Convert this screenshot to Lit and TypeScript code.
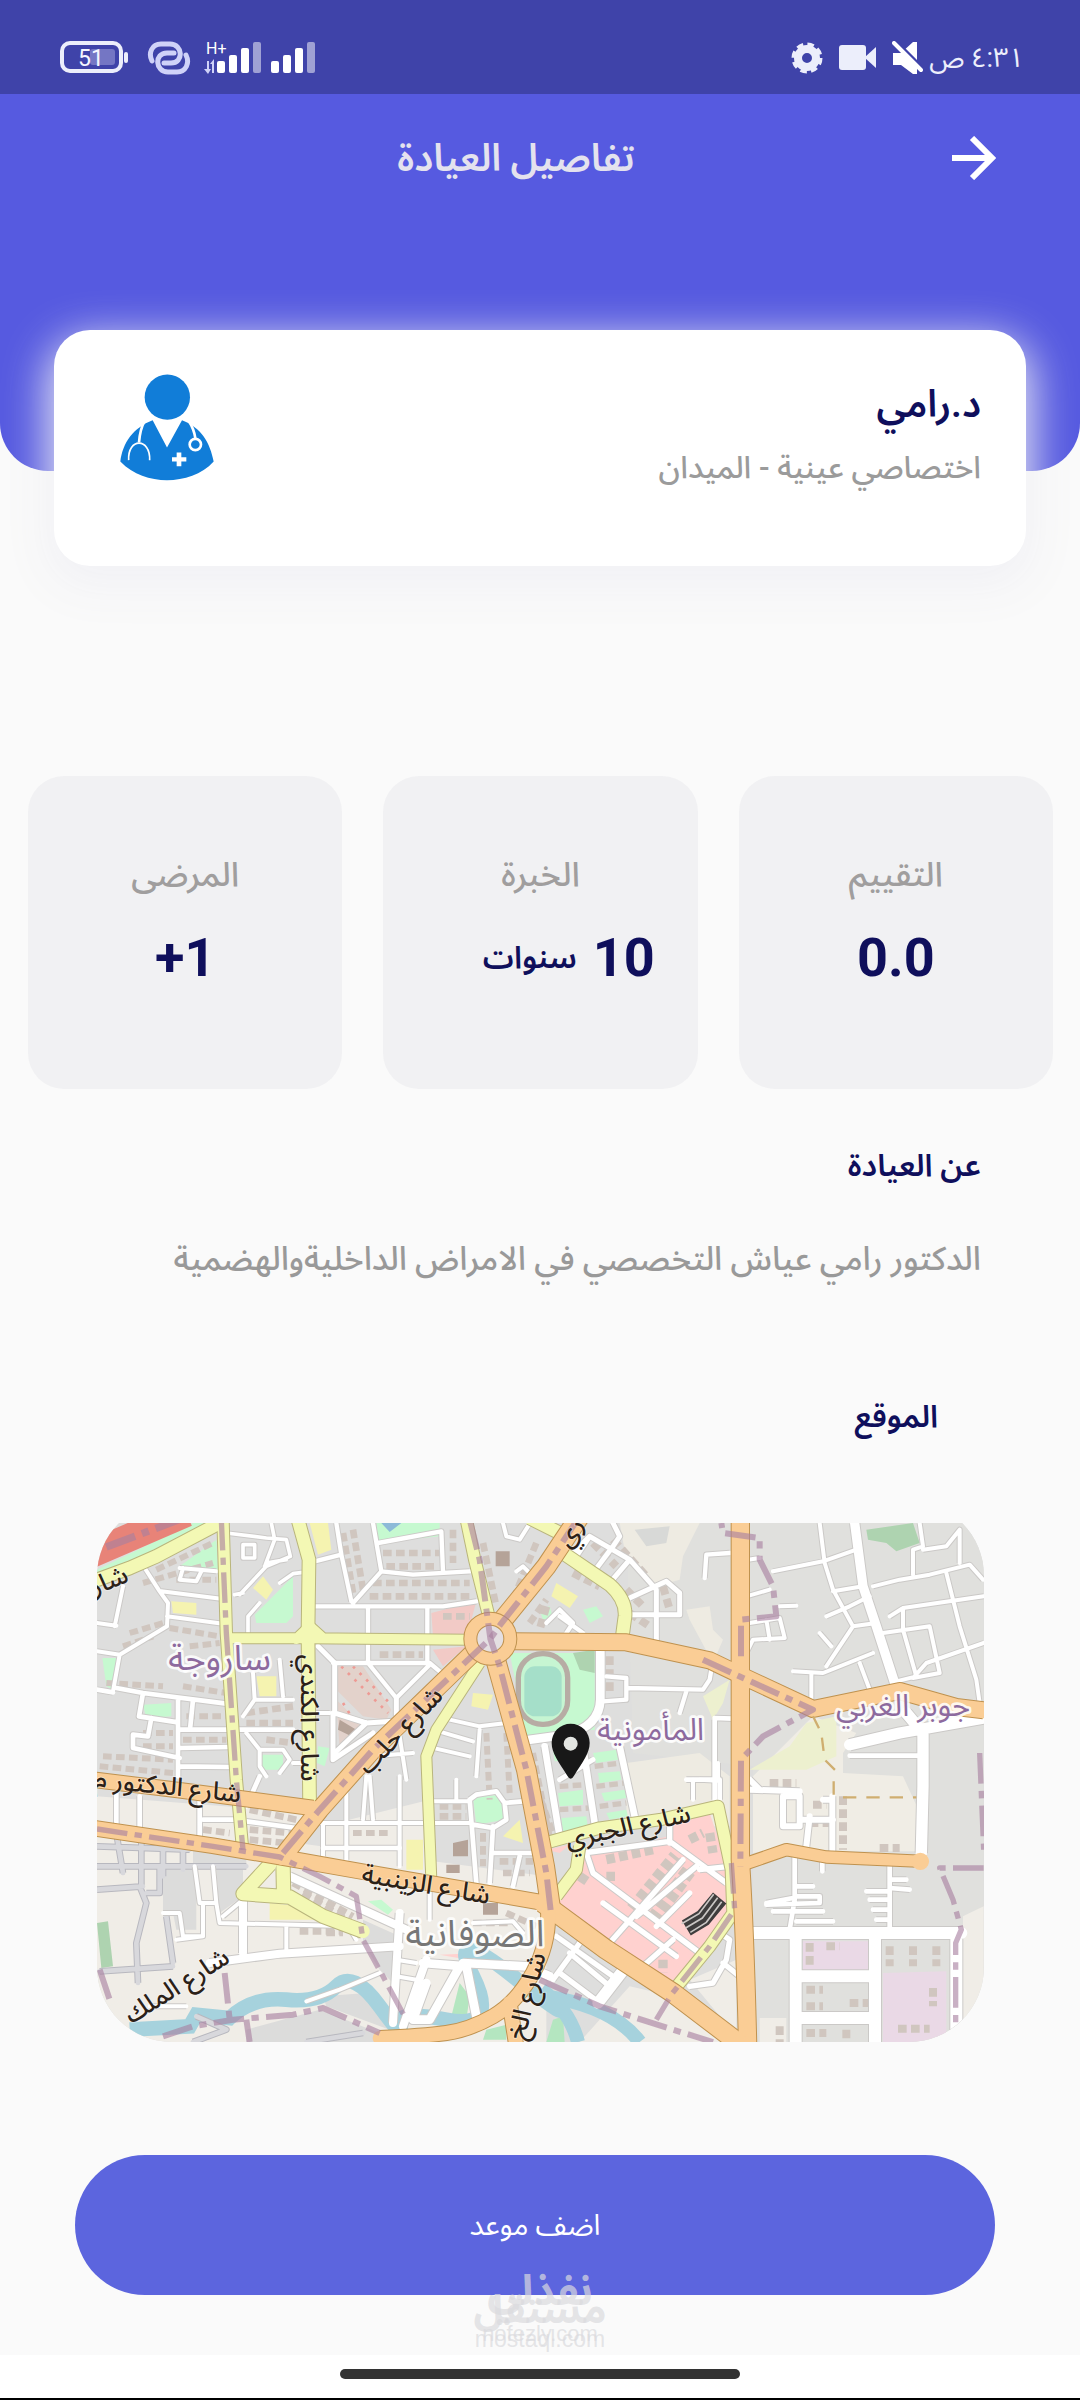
import { LitElement, html, svg, css } from "lit";
import { customElement } from "lit/decorators.js";

interface Road {
  d: string;
  w: number;
}

interface Label {
  text: string;
  x: number;
  y: number;
  size: number;
  angle: number;
  kind: "street" | "place" | "quarter";
}

const landuse: Array<[string, string]> = [
  ["#f0ede7", "M52 930 340 960 500 1010 1400 1130V1627H52Z"],
  ["#dcdcdb", "M250 1110H350V1290H290L280 1240 250 1235ZM410 1110H490V1190L420 1240ZM340 1050 500 1070V1100H340Z"],
  ["#dcdcdb", "M500 1590 720 1530 900 1600V1627H500ZM850 1260 960 1310 940 1450 900 1410 850 1330ZM730 1490 860 1480 930 1590 740 1520Z"],
  ["#f0ede7", "M52 890 690 940 620 1040 52 960ZM730 980 1050 900 1050 1110 730 1060Z"],
  ["#e0e0dd", "M1640 70H2712V1260L2640 1290V1627H2020V800L1660 760Z"],
  ["#eeebe2", "M1620 70H1860L1810 170 1800 240 1730 260 1640 180ZM1820 330 1890 320 1900 390 1930 420 1900 490 1830 360ZM1640 790 1860 760 1950 830V980H1640Z"],
  ["#d8d9d7", "M1665 90 1770 80 1760 130 1700 140Z"],
  ["#f0ede5", "M2020 830 2200 650 2330 700 2290 760V820L2470 830 2530 960V1055H2240L2120 1045 2020 1060Z"],
  ["#edf0cf", "M2010 810 2130 740 2180 670 2270 650V770L2180 810ZM1870 590 1950 540 1930 610 1900 660Z"],
  ["#f0ede7", "M2650 1250 2712 1220V1627H2650ZM2040 1555H2120V1627H2040ZM1650 1460 1780 1490 1960 1627H1500ZM1830 1440 1970 1380V1610Z"],
  ["#f2cac6", "M1055 340 1190 305 1170 380 1150 410H1060ZM1060 450 1160 440 1090 500Z"],
  ["#ffd1cf", "M1440 1190 1510 1060 1770 1010 1770 970 1890 940 1950 1120 1950 1250 1780 1465 1440 1210ZM1400 1050 1470 1035 1440 1060ZM1080 1365 1200 1360 1330 1410 1220 1390Z"],
  ["#ead9e6", "M2170 1325H2370V1410L2170 1415ZM2410 1420 2600 1415V1627H2410Z"],
  ["#c6f9d0", "M52 210 340 70H400L52 245ZM300 200 410 120 415 210ZM525 345 640 230V350L620 370H530ZM890 70H1080V110L895 130ZM68 475H110L100 570 80 560ZM190 615 275 610V650L200 655ZM545 765H610V810H545ZM715 740 750 745 735 800 712 790Z"],
  ["#c6f9d0", "M785 500 820 510 905 610 890 630ZM1180 895 1260 885 1275 960 1190 975ZM865 1205 905 1200 940 1230 925 1245ZM1290 460H1545V690L1340 710ZM1510 330 1550 320 1570 350 1530 370ZM1380 330 1410 320 1420 355 1390 360Z"],
  ["#c6f9d0", "M1420 750 1500 740 1495 780 1425 785ZM1435 880 1510 870V915L1440 920ZM1445 955 1520 950 1525 985 1450 1000ZM1540 760 1610 750 1615 780 1550 790ZM1555 820 1620 815 1625 840 1560 850ZM1565 880 1635 870 1640 895 1575 905ZM1580 940 1640 930 1645 950 1590 960Z"],
  ["#aed3b0", "M2360 90 2500 70 2520 130 2450 155 2420 130 2365 120ZM1480 460 1545 450V520L1500 510ZM52 1270 85 1265 100 1400 65 1405Z"],
  ["#b4e6c0", "M1110 1570 1140 1450 1170 1490 1160 1560ZM1220 1590 1280 1575 1280 1620 1210 1620ZM1400 1627 1420 1560 1450 1550 1455 1627Z"],
  ["#8dbad8", "M905 70H965L930 97Z"],
  ["#f5f3b0", "M690 70H745L755 150 715 165ZM520 265 550 230 580 270 560 300ZM275 305 350 310 350 345 280 340ZM530 530H590V590H540ZM1180 580 1240 585 1225 630 1175 620ZM1430 250 1495 290 1470 325 1415 290ZM570 1210 660 1220 720 1260H570ZM980 1020H1030V1110H980ZM1270 1010 1320 960 1330 1030Z"],
  ["#e3d2cb", "M770 500 850 500 935 630 920 660 850 650 770 570ZM770 600 850 680 780 750Z"],
];

const buildingRows: Array<[string, number]> = [
  ["M230 210 400 130M190 250 400 190M290 240H410M270 385 420 410M150 400 250 370M130 440 220 410M80 550 250 560M330 440 420 430", 18],
  ["M190 700H280M190 740H280M310 560 440 580M320 650H440M310 720H440M70 770 280 780M60 800 280 820", 18],
  ["M500 640 640 620M500 670H640M560 720 640 730M650 60V90M820 90 850 270M790 100 820 280M910 160H1080M920 200H1070", 20],
  ["M880 250H1170M870 290H1170M900 465H1030M1090 350H1170M1120 90V190M1210 130 1250 320M1370 130 1300 300M1350 370 1400 300", 20],
  ["M370 990 450 1000M370 1025 450 1030M510 930 650 960M510 990 640 1000M510 1020 620 1030M640 1150 820 1250M670 1180 800 1260", 20],
  ["M660 1295H780M740 1300H790M1080 920H1160M1080 950H1160M1260 1085H1360M1270 1120H1350M1180 1270H1290M1280 1240 1370 1280", 20],
  ["M820 1000H930M1210 1000V1100M1220 700 1230 900M1280 700 1290 880M1360 760 1410 1010M1370 860 1420 1000", 18],
  ["M1540 130 1610 200M1600 120 1700 230M1640 270 1690 320M1750 260 1770 330M1650 340 1710 380M1590 470V580M1400 320 1380 390M1480 220 1560 260", 24],
  ["M1440 860 1520 855M1440 930 1530 925M1545 800 1625 790M1550 860 1635 850M1560 920 1640 910", 16],
  ["M1660 1230 1790 1070M1720 1260 1830 1110", 44],
  ["M1830 1020 1870 1000M1890 1000 1900 1060M1580 1080 1720 1050M1580 1130H1610M1500 1130 1530 1150M1750 1380V1420", 28],
  ["M2290 890V1050M2200 915H2240M2400 1045H2460M2070 850H2150M2190 970H2250", 24],
  ["M2190 1330V1400M2240 1340H2280M2180 1470H2230M2180 1520H2230M2310 1510H2370M2180 1600H2240M2300 1590V1627M2560 1465V1520M2455 1587H2550M2100 1580V1627M2430 1340V1400M2500 1340V1400M2570 1340V1400", 24],
];

const minorRoads: Road[] = [
  { w: 12, d: "M195 205 240 275 265 310 262 380 120 465 52 455M245 275 430 298M262 350 430 372M120 465 100 575M300 205 410 215M310 205 300 240 350 245 365 215M130 260 105 380M52 370 110 378" },
  { w: 14, d: "M52 570 100 578M110 565 190 580 440 612M190 580 178 650 295 668M215 655 205 710 160 705V745L300 775M295 600V830M340 600 332 680M295 690H640M300 745 450 742M300 800 450 802" },
  { w: 11, d: "M440 100 560 115 620 120 632 170 560 200 480 285M575 70 585 120 555 200M490 135H525V175H490ZM465 285 490 280M560 190 620 180M505 400V350L540 310M600 250 640 222 670 218" },
  { w: 13, d: "M705 185 785 165 770 70M785 165 815 305M820 310 905 215 880 70M895 130 1085 95 1090 215M905 215 1000 225 1170 215M705 320H1090L1190 305M865 320V485M1043 320V490M760 490H1050L1080 515M865 490 950 595 1050 495" },
  { w: 15, d: "M715 440 765 490V640L860 670 940 665M950 595V650M860 670 765 760M760 640V780L880 700" },
  { w: 12, d: "M520 520 525 600 490 650M600 480 610 590M525 600 640 600M500 700 540 750V800L560 830M540 750H610L630 780 600 820M640 790H670M700 640H750M1270 70 1280 110 1320 120 1345 80M1310 215 1330 200 1350 220" },
  { w: 12, d: "M1110 660 1200 680 1280 670M1060 690 1180 725M1200 690 1190 830M960 710 980 840M880 770 1000 760M1040 740 1170 770M860 830 850 960M960 830V1100M720 970H1170M800 880V1080M730 970V1070M870 830 880 960M1060 905H1170M1130 840V900" },
  { w: 14, d: "M1170 900 1190 1150M1240 980 1230 1150M1170 900 1190 885 1250 875 1275 910 1330 905M1275 910 1280 960 1240 985 1180 975M1240 1060H1360M1320 1070 1300 1160M730 1045H960M500 920 540 830M500 965 650 985M360 900V1020M180 890V990M110 880V980M370 960H480" },
  { w: 24, d: "M490 1170V1360M390 1390 600 1362 960 1340M630 1130 980 1290M960 1240 940 1570M1040 1380 970 1580" },
  { w: 12, d: "M345 1100 360 1210H410L420 1270 820 1280M400 1100 410 1210M250 1240H300L310 1310H370V1215M620 1280V1350M800 1270 830 1320M290 1320 370 1310M430 1250 490 1200M1050 1130V1260M1180 1270 1300 1265 1330 1300M950 1380 1010 1390M950 1430 1010 1440M680 1505 780 1470 900 1420M210 1520H320" },
  { w: 26, d: "M1030 1390 1160 1400 1190 1550M1140 1400 1050 1560 1000 1560 1040 1450M1150 1390 1340 1400 1410 1430" },
  { w: 15, d: "M1440 840 1540 780M1480 160 1530 110 1650 180 1730 270 1730 430M1530 110 1490 170M1600 140 1540 220M1650 180 1590 250M1650 295 1760 245 1800 280 1800 345H1650M1600 140 1620 110 1600 70" },
  { w: 13, d: "M1400 370 1440 330 1480 370 1460 400M1440 350 1510 400M1580 530 1640 535 1640 600 1570 605M1640 565 1870 570 1890 540 1895 510M1820 575 1800 640M1875 235 1880 165 1950 160" },
  { w: 26, d: "M1562 450V600Q1560 680 1460 705L1340 722" },
  { w: 20, d: "M1395 740 1440 1010M1510 740 1545 970M1620 740 1665 950" },
  { w: 28, d: "M2325 70 2350 260 2390 380 2445 550" },
  { w: 12, d: "M2080 215 2230 185 2330 150M2220 70 2235 190 2260 270 2320 380 2240 500M2380 260 2460 240 2550 225 2670 195 2710 240M2240 350 2310 320 2370 290M2320 380 2390 370M2260 275 2350 260M2220 400 2255 440" },
  { w: 12, d: "M2520 70 2530 140 2500 150V225M2530 150 2600 140 2640 90V190M2410 400 2550 380 2580 520 2500 535 2540 490 2712 430M2600 220 2640 380 2690 540 2700 610M2430 350 2470 325 2712 290M2470 325V390L2510 530 2450 545" },
  { w: 12, d: "M2140 515 2230 520 2380 460M2195 520V600M2340 490 2370 570M2000 290 2070 270M2005 180 2040 175M2010 370 2100 355 2115 415 2020 420 2000 460M2060 360 2070 420M2100 320 2150 318M1840 840V900M1860 840 1915 843V790" },
  { w: 34, d: "M2310 735 2460 700 2712 655M2480 640 2530 700V860L2525 1060" },
  { w: 14, d: "M2310 768H2520M1905 655 1960 657M1905 660V900M1820 840H1920V900" },
  { w: 18, d: "M2258 890V1060M2190 950 2180 1040M2110 890H2160V980H2110ZM2010 870 2160 875M2010 840 2040 870M2160 960H2260M2230 900H2250" },
  { w: 14, d: "M2145 1070V1200L2130 1290M2228 1085V1115M2430 1100V1290M2150 1160H2200M2150 1190H2220V1210L2060 1215M2060 1210 2140 1195M2080 1235H2230M2150 1265H2260M2360 1175H2430M2430 1140H2480M2430 1165 2490 1170M2370 1200H2430M2380 1230H2430M2390 1260H2430" },
  { w: 36, d: "M2020 1300H2645M2148 1300V1627M2386 1310V1627M2148 1430H2386M2148 1555H2386M2630 1300V1627" },
  { w: 16, d: "M1510 1060 1770 1025 1940 1150M1520 1060 1540 1120 1860 1360M1770 980V1030M1590 1330 1810 1080M1690 1400 1780 1320M1570 1210 1790 1370M1730 1280 1830 1180M1670 1250 1850 1100M1860 1110 1950 1100" },
  { w: 16, d: "M1430 1310 1600 1430M1500 1330 1420 1440M1470 1360 1590 1460M1440 1420 1560 1510M1920 1300 1950 1320 1940 1380 1900 1450 1830 1460M1930 1390 1980 1430" },
  { w: 34, d: "M1640 1400 1555 1510" },
];

const greyRoads: Road[] = [
  { w: 14, d: "M52 1040 330 1050M52 1100H330M110 1000 130 1120M185 1000V1160M250 1040V1130M310 1050V1110M180 1160 200 1210 170 1330 175 1450M60 1415 280 1400M260 1250 280 1390M52 1170 190 1160M200 1180H240V1100M330 1100H500M350 1550 440 1590 340 1627M680 1627 850 1600" },
];

const yellowRoads: Road[] = [
  { w: 38, d: "M40 245 150 205 230 170 420 70" },
  { w: 34, d: "M430 60 440 400 470 840 490 1060" },
  { w: 38, d: "M655 60 688 180 685 400 690 940" },
  { w: 30, d: "M450 416 690 416 1170 420M650 418 690 380 730 416" },
  { w: 34, d: "M1160 60 1185 180 1230 360" },
  { w: 30, d: "M1200 490 1070 690 1040 770 1055 1140" },
  { w: 38, d: "M1450 160 1590 255Q1640 300 1636 350L1628 410M1350 55 1450 105" },
  { w: 34, d: "M1390 1032 1560 985 1740 960 1915 920 1955 1110 1960 1240 1890 1340 1775 1480" },
  { w: 34, d: "M1500 1040 1490 1110 1430 1190" },
  { w: 40, d: "M570 1095 490 1182 630 1192 730 1250 850 1295M610 1090 612 1190" },
];

const orangeRoads: Road[] = [
  { w: 48, d: "M1300 425 1640 428 1890 482 1990 530 2200 628 2460 574 2630 622 2712 632" },
  { w: 52, d: "M1982 60V1080Q1996 1300 2004 1640" },
  { w: 56, d: "M1262 370 1400 200 1500 50" },
  { w: 52, d: "M1190 450 880 750 720 930 610 1070" },
  { w: 56, d: "M1245 470 1340 810 1395 1100 1415 1240" },
  { w: 44, d: "M40 840 300 872 700 925" },
  { w: 44, d: "M40 985 400 1038 600 1072 900 1125 1410 1212" },
  { w: 56, d: "M1390 1210 1580 1350 1780 1480 1990 1640" },
  { w: 42, d: "M1405 1230Q1410 1330 1360 1420T1240 1550 1100 1600 900 1615M1290 1510 1310 1640" },
  { w: 34, d: "M1990 1095 2120 1050 2240 1072 2530 1085" },
];

const boundaries: Road[] = [
  { w: 16, d: "M425 60 440 400 470 840 490 1050" },
  { w: 18, d: "M1500 50 1400 200 1262 375 1232 417 880 750 720 930 610 1060" },
  { w: 18, d: "M1170 60 1200 180 1232 417 1260 500 1340 810 1400 1120 1415 1250" },
  { w: 16, d: "M52 988 400 1040 600 1072 720 1130 830 1190 850 1320 910 1430 980 1560" },
  { w: 18, d: "M1870 480 1990 535 2200 630 2050 710 1984 780 1982 1100M1984 470V360L2090 350 2080 260 2040 180 2040 115 1930 100 1925 70" },
  { w: 16, d: "M1955 1090 1965 1230 1890 1340 1775 1485 1730 1560" },
  { w: 18, d: "M1380 1440 1560 1520 1780 1590 1900 1627" },
  { w: 18, d: "M250 1610 340 1580 460 1560 640 1545 730 1525 900 1600M435 1420 450 1560M500 1560 510 1627M60 1410 90 1500" },
  { w: 16, d: "M2712 1105H2580L2620 1200 2645 1290 2628 1330V1627M2700 760 2712 1050" },
  { w: 22, d: "M80 142 330 48" },
];

const labels: Label[] = [
  { text: "ساروجة", x: 420, y: 510, size: 104, angle: 0, kind: "place" },
  { text: "المأمونية", x: 1713, y: 722, size: 92, angle: 0, kind: "place" },
  { text: "جوبر الغربي", x: 2470, y: 648, size: 92, angle: 0, kind: "place" },
  { text: "الصوفانية", x: 1186, y: 1340, size: 110, angle: 0, kind: "quarter" },
  { text: "شارع الكندي", x: 665, y: 655, size: 76, angle: 90, kind: "street" },
  { text: "شارع حلب", x: 980, y: 710, size: 76, angle: -46, kind: "street" },
  { text: "شارع الدكتور م", x: 262, y: 885, size: 76, angle: 6, kind: "street" },
  { text: "شارع الزينبية", x: 1035, y: 1180, size: 76, angle: 10, kind: "street" },
  { text: "شارع الجبري", x: 1650, y: 1005, size: 76, angle: -12, kind: "street" },
  { text: "شارع الملك", x: 305, y: 1480, size: 76, angle: -32, kind: "street" },
  { text: "شارع الخ", x: 1366, y: 1495, size: 76, angle: -76, kind: "street" },
  { text: "شار", x: 98, y: 266, size: 76, angle: -22, kind: "street" },
  { text: "ري", x: 1492, y: 112, size: 76, angle: -58, kind: "street" },
];

@customElement("clinic-map")
export class ClinicMap extends LitElement {
  static styles = css`
    :host {
      display: block;
    }
    .canvas {
      display: block;
      width: 100%;
      height: auto;
    }
    .case,
    .fill,
    .dash {
      fill: none;
      stroke-linejoin: round;
    }
    .fill {
      stroke-linecap: round;
    }
    .dash {
      stroke: #a8809f;
      stroke-opacity: 0.62;
      stroke-dasharray: 92 22 22 22;
    }
    .rows {
      fill: none;
      stroke: #d0c6bf;
      stroke-dasharray: 26 13;
    }
    .label {
      font-family: "Noto Sans Arabic", "Noto Sans", "DejaVu Sans", sans-serif;
      paint-order: stroke;
      stroke-linejoin: round;
      text-anchor: middle;
      direction: rtl;
    }
    .street {
      font-weight: 500;
      fill: #2b2118;
      stroke: #fff;
      stroke-opacity: 0.35;
      stroke-width: 6;
    }
    .place {
      fill: #8d6a9e;
      stroke: #fff;
      stroke-opacity: 0.85;
      stroke-width: 16;
    }
    .quarter {
      fill: #777;
      stroke: #fff;
      stroke-opacity: 0.85;
      stroke-width: 16;
    }
  `;

  private roads(list: Road[], fill: string, edge: string) {
    return svg`
      ${list.map((r) => svg`<path class="case" d=${r.d} stroke=${edge} stroke-width=${r.w + 6}></path>`)}
      ${list.map((r) => svg`<path class="fill" d=${r.d} stroke=${fill} stroke-width=${r.w}></path>`)}
    `;
  }

  render() {
    return html`
      <svg class="canvas" viewBox="52 70 2661 1557" role="img" aria-label="خريطة موقع العيادة">
        <defs>
          <clipPath id="frame"><rect x="52" y="4" width="2661" height="1623" rx="225"></rect></clipPath>
        </defs>
        <g clip-path="url(#frame)">
          <rect x="52" y="70" width="2661" height="1557" fill="#dededd"></rect>
          ${landuse.map(([fill, d]) => svg`<path d=${d} fill=${fill}></path>`)}
          ${buildingRows.map(([d, w]) => svg`<path class="rows" d=${d} stroke-width=${w}></path>`)}
          <path d="M1248 155H1290V200H1248ZM1120 1030 1165 1020V1070H1120ZM1210 1210H1255V1245H1210ZM780 660 830 690 815 710 775 690ZM1100 1095H1140V1120H1100Z" fill="#b5a398"></path>
          <path d="M785 500 925 640M790 610 840 690M820 500 930 610" fill="none" stroke="#ee9a94" stroke-width="8" stroke-dasharray="8 20"></path>
          <path d="M150 1590 330 1580 350 1545 450 1555Q520 1490 620 1500T770 1460 900 1520 960 1580 1100 1560 1180 1430 1300 1430 1420 1500" fill="none" stroke="#a6d2dd" stroke-width="44"></path>
          <path d="M1385 1470Q1470 1530 1495 1627M1400 1490Q1600 1520 1680 1627" fill="none" stroke="#a6d2dd" stroke-width="42"></path>
          <rect x="1316" y="462" width="148" height="212" rx="72" fill="#c6f5d2" stroke="#b7aca4" stroke-width="16"></rect>
          <rect x="1334" y="500" width="112" height="150" rx="32" fill="#a5dfc9"></rect>
          <path d="M30 165 320 40" fill="none" stroke="#e88378" stroke-width="84"></path>
          ${this.roads(greyRoads, "#d8d8dc", "#b8b8bf")}
          ${this.roads(minorRoads, "#ffffff", "#cbc9c7")}
          ${this.roads(yellowRoads, "#f3f8b4", "#b9b57c")}
          ${this.roads(orangeRoads, "#facd95", "#bf924f")}
          <circle cx="2522" cy="1085" r="26" fill="#facd95"></circle>
          <circle cx="1232" cy="417" r="60" fill="#e4dfe2" stroke="#bf924f" stroke-width="42"></circle>
          <circle cx="1232" cy="417" r="60" fill="none" stroke="#facd95" stroke-width="36"></circle>
          ${boundaries.map((r) => svg`<path class="dash" d=${r.d} stroke-width=${r.w}></path>`)}
          <path d="M2200 650 2225 700 2235 780 2270 815M2262 845V890M2290 893H2510" fill="none" stroke="#cfae70" stroke-width="7" stroke-dasharray="40 30"></path>
          <path d="M1820 1285 1870 1255 1920 1195" fill="none" stroke="#3f3d3d" stroke-width="52"></path>
          <path d="M1806 1272 1858 1242 1902 1184M1818 1285 1868 1255 1914 1194M1832 1298 1880 1268 1926 1206" fill="none" stroke="#c9c6c4" stroke-width="5"></path>
          ${labels.map(
            (l) => svg`<text class="label ${l.kind}" x=${l.x} y=${l.y} font-size=${l.size} transform="rotate(${l.angle} ${l.x} ${l.y})">${l.text}</text>`
          )}
          <path d="M1473 672a57 57 0 0 0-57 58c0 30 20 55 47 98q10 18 20 0c27-43 47-68 47-98a57 57 0 0 0-57-58Z" fill="#181818"></path>
          <circle cx="1473" cy="732" r="21" fill="#e4e6e2"></circle>
        </g>
      </svg>
    `;
  }
}

@customElement("status-bar")
export class StatusBar extends LitElement {
  static styles = css`
    :host {
      display: block;
    }
    .bar {
      display: flex;
      justify-content: space-between;
      align-items: center;
      height: 94px;
      padding: 22px 56px 0 60px;
      box-sizing: border-box;
      background: #3f43a9;
      color: #eceefb;
      direction: ltr;
    }
    .group {
      display: flex;
      align-items: center;
      gap: 13px;
    }
    .alerts {
      display: flex;
      align-items: center;
      gap: 16px;
    }
    .icon {
      display: block;
    }
    .clock {
      font: 27px/36px Roboto, "Noto Sans Arabic", "DejaVu Sans", sans-serif;
      direction: rtl;
    }
    .tiny {
      font-family: Roboto, sans-serif;
    }
    .right {
      gap: 6px;
    }
  `;

  render() {
    return html`
      <div class="bar">
        <div class="group">
          <svg class="icon" width="74" height="34" viewBox="0 0 74 34">
            <rect x="2" y="2" width="59" height="28" rx="8" fill="none" stroke="#eceefb" stroke-width="4"></rect>
            <rect x="30" y="8" width="25" height="16" rx="3" fill="#7476c4"></rect>
            <rect x="64" y="11" width="4" height="11" rx="2" fill="#eceefb"></rect>
            <text class="tiny" x="31" y="25" font-size="23" text-anchor="middle" fill="#f4f5ff">51</text>
          </svg>
          <svg class="icon" width="44" height="36" viewBox="0 0 44 36" fill="none" stroke="#cfd2f8" stroke-width="5" stroke-linecap="round">
            <path d="M5 21C1 13 5 4 14 4H23C36 4 37 23 24 23H17"></path>
            <path d="M39 15C43 23 39 32 30 32H21C8 32 7 13 20 13H27"></path>
          </svg>
          <svg class="icon" width="114" height="36" viewBox="0 0 114 36" fill="#fff">
            <text class="tiny" x="2" y="14" font-size="16">H+</text>
            <path d="M3 21h2v8h2l-3 5-4-5h3zM8 33V24H6l4-5v14z" fill="#cfd2f8"></path>
            <rect x="13" y="21" width="8" height="12" rx="2"></rect>
            <rect x="25" y="15" width="8" height="18" rx="2"></rect>
            <rect x="37" y="8" width="8" height="25" rx="2"></rect>
            <rect x="49" y="2" width="8" height="31" rx="2" opacity=".5"></rect>
            <rect x="67" y="21" width="8" height="12" rx="2"></rect>
            <rect x="79" y="15" width="8" height="18" rx="2"></rect>
            <rect x="91" y="8" width="8" height="25" rx="2"></rect>
            <rect x="103" y="2" width="8" height="31" rx="2" opacity=".5"></rect>
          </svg>
        </div>
        <div class="group right">
          <div class="alerts">
            <svg class="icon" width="32" height="32" viewBox="0 0 32 32">
              <circle cx="16" cy="16" r="9" fill="none" stroke="#eceefb" stroke-width="8"></circle>
              <circle cx="16" cy="16" r="13" fill="none" stroke="#eceefb" stroke-width="5" stroke-dasharray="6.2 4.01"></circle>
            </svg>
            <svg class="icon" width="37" height="26" viewBox="0 0 37 26" fill="#eceefb">
              <rect x="0" y="0" width="27" height="25" rx="3"></rect>
              <path d="M26 12 37 2v21L26 13z"></path>
            </svg>
            <svg class="icon" width="31" height="34" viewBox="0 0 31 34">
              <path d="M1 12h8L21 1h4v32h-4L9 24H1z" fill="#fff"></path>
              <path d="M1 -3 32 28" stroke="#3f43a9" stroke-width="3"></path>
              <path d="M2 2 29 29" stroke="#fff" stroke-width="4" stroke-linecap="round"></path>
            </svg>
          </div>
          <span class="clock">٤:٣١ ص</span>
        </div>
      </div>
    `;
  }
}

@customElement("app-root")
export class AppRoot extends LitElement {
  static styles = css`
    :host {
      display: block;
      color: #0f0f5c;
      background: #fafafa;
      font-family: Roboto, "Noto Sans Arabic", "DejaVu Sans", sans-serif;
    }
    .page {
      display: flex;
      flex-direction: column;
      min-height: 100vh;
    }
    .hero {
      height: 377px;
      padding: 34px 76px 0;
      box-sizing: border-box;
      background: #565ae0;
      border-radius: 0 0 48px 48px;
    }
    .toolbar {
      display: grid;
      grid-template-columns: 60px 1fr 60px;
      align-items: center;
    }
    .back {
      display: grid;
      place-items: center;
      width: 60px;
      height: 60px;
      padding: 0;
      border: 0;
      background: none;
    }
    .title {
      margin: 0;
      padding-right: 48px;
      text-align: center;
      font-size: 38px;
      line-height: 60px;
      font-weight: 600;
      color: #e4e2ee;
    }
    .doctor {
      display: flex;
      justify-content: space-between;
      align-items: flex-start;
      margin: -141px 54px 0;
      padding: 44px 45px 68px 66px;
      border-radius: 36px;
      background: #fff;
      box-shadow: 0 14px 44px 6px rgba(240, 240, 244, 0.95);
    }
    .name,
    .speciality,
    .heading,
    .about {
      margin: 0;
      line-height: 60px;
    }
    .name {
      font-size: 38px;
      font-weight: 600;
    }
    .speciality {
      margin-top: 4px;
      font-size: 31px;
      font-weight: 500;
      color: #9b9b9b;
    }
    .stats {
      display: grid;
      grid-template-columns: repeat(3, 1fr);
      gap: 41px;
      margin: 210px 27px 0 28px;
    }
    .stat {
      padding: 68px 0 91px;
      border-radius: 36px;
      background: #f1f1f3;
      text-align: center;
    }
    .stat-label {
      margin: 0 0 14px;
      font-size: 34px;
      line-height: 60px;
      font-weight: 500;
      color: #a09e9e;
    }
    .stat-value {
      display: flex;
      justify-content: center;
      align-items: center;
      gap: 16px;
      margin: 0;
      font-size: 54px;
      line-height: 80px;
      font-weight: 700;
    }
    .with-unit {
      justify-content: flex-start;
      padding-right: 43px;
    }
    .unit {
      font-size: 31px;
      font-weight: 600;
    }
    .heading {
      font-size: 31px;
      font-weight: 600;
    }
    .intro {
      margin: 47px 99px 0;
    }
    .about {
      margin-top: 33px;
      font-size: 33px;
      font-weight: 500;
      color: #999;
    }
    .location {
      margin: 98px 96px 0 97px;
    }
    .location .heading {
      padding-right: 46px;
      margin-bottom: 76px;
    }
    .actions {
      position: relative;
      padding: 113px 85px 60px 75px;
    }
    .book {
      display: block;
      width: 100%;
      height: 140px;
      border: 0;
      border-radius: 70px;
      background: #5c65de;
      color: #fff;
      font: 29px/60px Roboto, "Noto Sans Arabic", "DejaVu Sans", sans-serif;
    }
    .watermark {
      position: absolute;
      bottom: 0;
      left: 50%;
      width: 140px;
      height: 96px;
      margin-left: -70px;
      pointer-events: none;
      overflow: visible;
    }
    .mark {
      font-family: "Noto Sans Arabic", "DejaVu Sans", sans-serif;
      font-weight: 700;
      fill: #dadade;
      fill-opacity: 0.7;
      text-anchor: middle;
    }
    .domain {
      font-family: "Liberation Sans", sans-serif;
      font-weight: 400;
    }
    .gesture {
      display: grid;
      place-items: center;
      height: 45px;
      margin-top: auto;
      padding-bottom: 5px;
      box-sizing: border-box;
      border-bottom: 2px solid #000;
      background: #fff;
    }
    .handle {
      width: 37%;
      height: 10px;
      border-radius: 5px;
      background: #333;
    }
  `;

  render() {
    return html`
      <div class="page" dir="rtl" lang="ar">
        <status-bar></status-bar>
        <header class="hero">
          <div class="toolbar">
            <button class="back" type="button" aria-label="رجوع">
              <svg width="44" height="44" viewBox="0 0 44 44" fill="none" stroke="#fff" stroke-width="6">
                <path d="M0 22H40M20 2 40 22 20 42"></path>
              </svg>
            </button>
            <h1 class="title">تفاصيل العيادة</h1>
          </div>
        </header>
        <section class="doctor">
          <div>
            <h2 class="name">د.رامي</h2>
            <p class="speciality">اختصاصي عينية - الميدان</p>
          </div>
          <svg width="94" height="107" viewBox="0 0 282 320" aria-hidden="true">
            <circle cx="142" cy="69" r="68" fill="#117dd8"></circle>
            <path d="M98 138C40 160 8 205 1 262 40 302 90 318 141 318S245 302 281 262C270 205 244 160 186 138L141 220Z" fill="#117dd8"></path>
            <g fill="none" stroke="#fff" stroke-width="6">
              <path d="M74 140Q60 165 57 205" stroke-width="8"></path>
              <path d="M26 258C22 190 92 190 89 258" stroke-width="5"></path>
              <path d="M206 140Q222 165 226 192" stroke-width="8"></path>
              <circle cx="226" cy="211" r="17" stroke-width="8"></circle>
            </g>
            <path d="M170 235h14v14h15v13h-15v14h-14v-14h-14v-13h14z" fill="#fff"></path>
          </svg>
        </section>
        <section class="stats">
          <div class="stat">
            <p class="stat-label">التقييم</p>
            <p class="stat-value">0.0</p>
          </div>
          <div class="stat">
            <p class="stat-label">الخبرة</p>
            <p class="stat-value with-unit"><span>10</span><span class="unit">سنوات</span></p>
          </div>
          <div class="stat">
            <p class="stat-label">المرضى</p>
            <p class="stat-value"><span dir="ltr">+1</span></p>
          </div>
        </section>
        <section class="intro">
          <h2 class="heading">عن العيادة</h2>
          <p class="about">الدكتور رامي عياش التخصصي في الامراض الداخليةوالهضمية</p>
        </section>
        <section class="location">
          <h2 class="heading">الموقع</h2>
          <clinic-map></clinic-map>
        </section>
        <div class="actions">
          <button class="book" type="button">اضف موعد</button>
          <svg class="watermark" viewBox="0 0 140 96" aria-hidden="true">
            <text class="mark" x="70" y="46" font-size="42">نفذلي</text>
            <text class="mark" x="70" y="64" font-size="40">مستقل</text>
            <text class="mark domain" x="70" y="82" font-size="22">nofezly.com</text>
            <text class="mark domain" x="70" y="88" font-size="23">mostaql.com</text>
          </svg>
        </div>
        <footer class="gesture"><div class="handle"></div></footer>
      </div>
    `;
  }
}
